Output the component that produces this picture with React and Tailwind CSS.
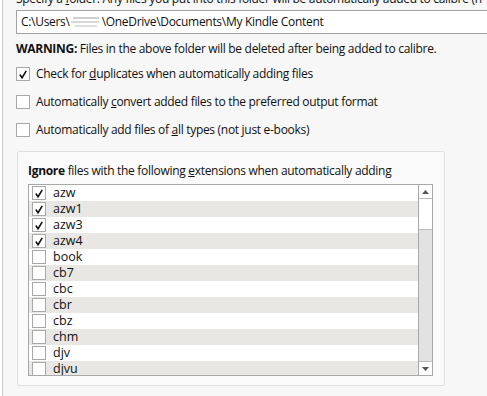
import React from 'react';

const exts = [
    { name: 'azw', on: true },
    { name: 'azw1', on: true },
    { name: 'azw3', on: true },
    { name: 'azw4', on: true },
    { name: 'book', on: false },
    { name: 'cb7', on: false },
    { name: 'cbc', on: false },
    { name: 'cbr', on: false },
    { name: 'cbz', on: false },
    { name: 'chm', on: false },
    { name: 'djv', on: false },
    { name: 'djvu', on: false },
];

const Tick = () => (
    <svg width="13" height="13" viewBox="0 0 13 13" className="block">
        <path d="M3 6.5 L5.5 10 L10 2.5" fill="none" stroke="#111" strokeWidth="1.7" />
    </svg>
);

const Box = ({ checked }) => (
    <div className="w-[14px] h-[14px] border border-[#a8a8a8] bg-white flex items-center justify-center shrink-0">
        {checked && <Tick />}
    </div>
);

const Option = ({ checked, children }) => (
    <div className="flex items-center h-[16px] gap-[6px]">
        <Box checked={checked} />
        <span>{children}</span>
    </div>
);

const App = () => {
    return (
        <div
            className="w-[487px] h-[396px] overflow-hidden bg-[#f7f7f7] text-[12px] text-[#111] leading-[16px] tracking-[-0.3px] flex"
            style={{ fontFamily: '"Open Sans", "Noto Sans", sans-serif' }}
        >
            <div className="w-[3px] shrink-0 border-r border-[#c8c8c8] bg-white" />
            <div className="flex-1 pl-[13px] flex flex-col">
                {/* cut-off description */}
                <div className="mt-[-9px] whitespace-nowrap">
                    Specify a <span className="underline">f</span>older. Any files you put into this folder will be automatically added to calibre (n
                </div>
                <div className="mt-[3px] h-[24px] border border-[#a3a3a3] bg-white flex items-center pl-[4px] whitespace-nowrap w-[480px]">
                    <span>C:\Users\</span>
                    {/* blurred user name */}
                    <span className="w-[30px] h-[12px] mx-[1px] flex flex-col justify-center gap-[2px] blur-[0.6px]">
                        <span className="h-[2px] w-[26px] ml-[2px] bg-[#cfcfcf]" />
                        <span className="h-[2px] w-[28px] bg-[#d8d8d8]" />
                        <span className="h-[2px] w-[22px] ml-[4px] bg-[#dedede]" />
                    </span>
                    <span>\OneDrive\Documents\My Kindle Content</span>
                </div>
                <div className="mt-[7px] whitespace-nowrap">
                    <b>WARNING:</b> Files in the above folder will be deleted after being added to calibre.
                </div>
                <div className="mt-[9px] flex flex-col gap-[12px]">
                    <Option checked>Check for <span className="underline">d</span>uplicates when automatically adding files</Option>
                    <Option>Automatically <span className="underline">c</span>onvert added files to the preferred output format</Option>
                    <Option>Automatically add files of <span className="underline">a</span>ll types (not just e-books)</Option>
                </div>
                {/* group box */}
                <div className="mt-[13px] ml-[1px] w-[428px] h-[235px] border border-[#e0e0e0] rounded-[2px] bg-[#fafafa] pt-[11px] pl-[10px]">
                    <div className="whitespace-nowrap">
                        <b>Ignore</b> files with the following <span className="underline">e</span>xtensions when automatically adding
                    </div>
                    <div className="mt-[5px] w-[405px] h-[192px] border border-[#a8a8a8] bg-white flex overflow-hidden">
                        <div className="flex-1 flex flex-col overflow-hidden">
                            {exts.map((e, i) => (
                                <div
                                    key={e.name}
                                    className={`h-[16px] shrink-0 flex items-center pl-[3px] gap-[7px] text-[12.5px] tracking-normal ${i % 2 ? 'bg-[#e8e7e3]' : 'bg-white'}`}
                                >
                                    <Box checked={e.on} />
                                    <span>{e.name}</span>
                                </div>
                            ))}
                        </div>
                        {/* scrollbar */}
                        <div className="w-[14px] shrink-0 border-l border-[#a8a8a8] flex flex-col bg-[#e2e2e2]">
                            <div className="h-[14px] bg-white border-b border-[#bdbdbd] flex items-center justify-center">
                                <svg width="7" height="4" viewBox="0 0 7 4"><path d="M0 4 L3.5 0 L7 4 Z" fill="#555" /></svg>
                            </div>
                            <div className="h-[31px] bg-white border-b border-[#bdbdbd]" />
                            <div className="flex-1" />
                            <div className="h-[14px] bg-white border-t border-[#bdbdbd] flex items-center justify-center">
                                <svg width="7" height="4" viewBox="0 0 7 4"><path d="M0 0 L3.5 4 L7 0 Z" fill="#555" /></svg>
                            </div>
                        </div>
                    </div>
                </div>
            </div>
        </div>
    );
};

export default App;
